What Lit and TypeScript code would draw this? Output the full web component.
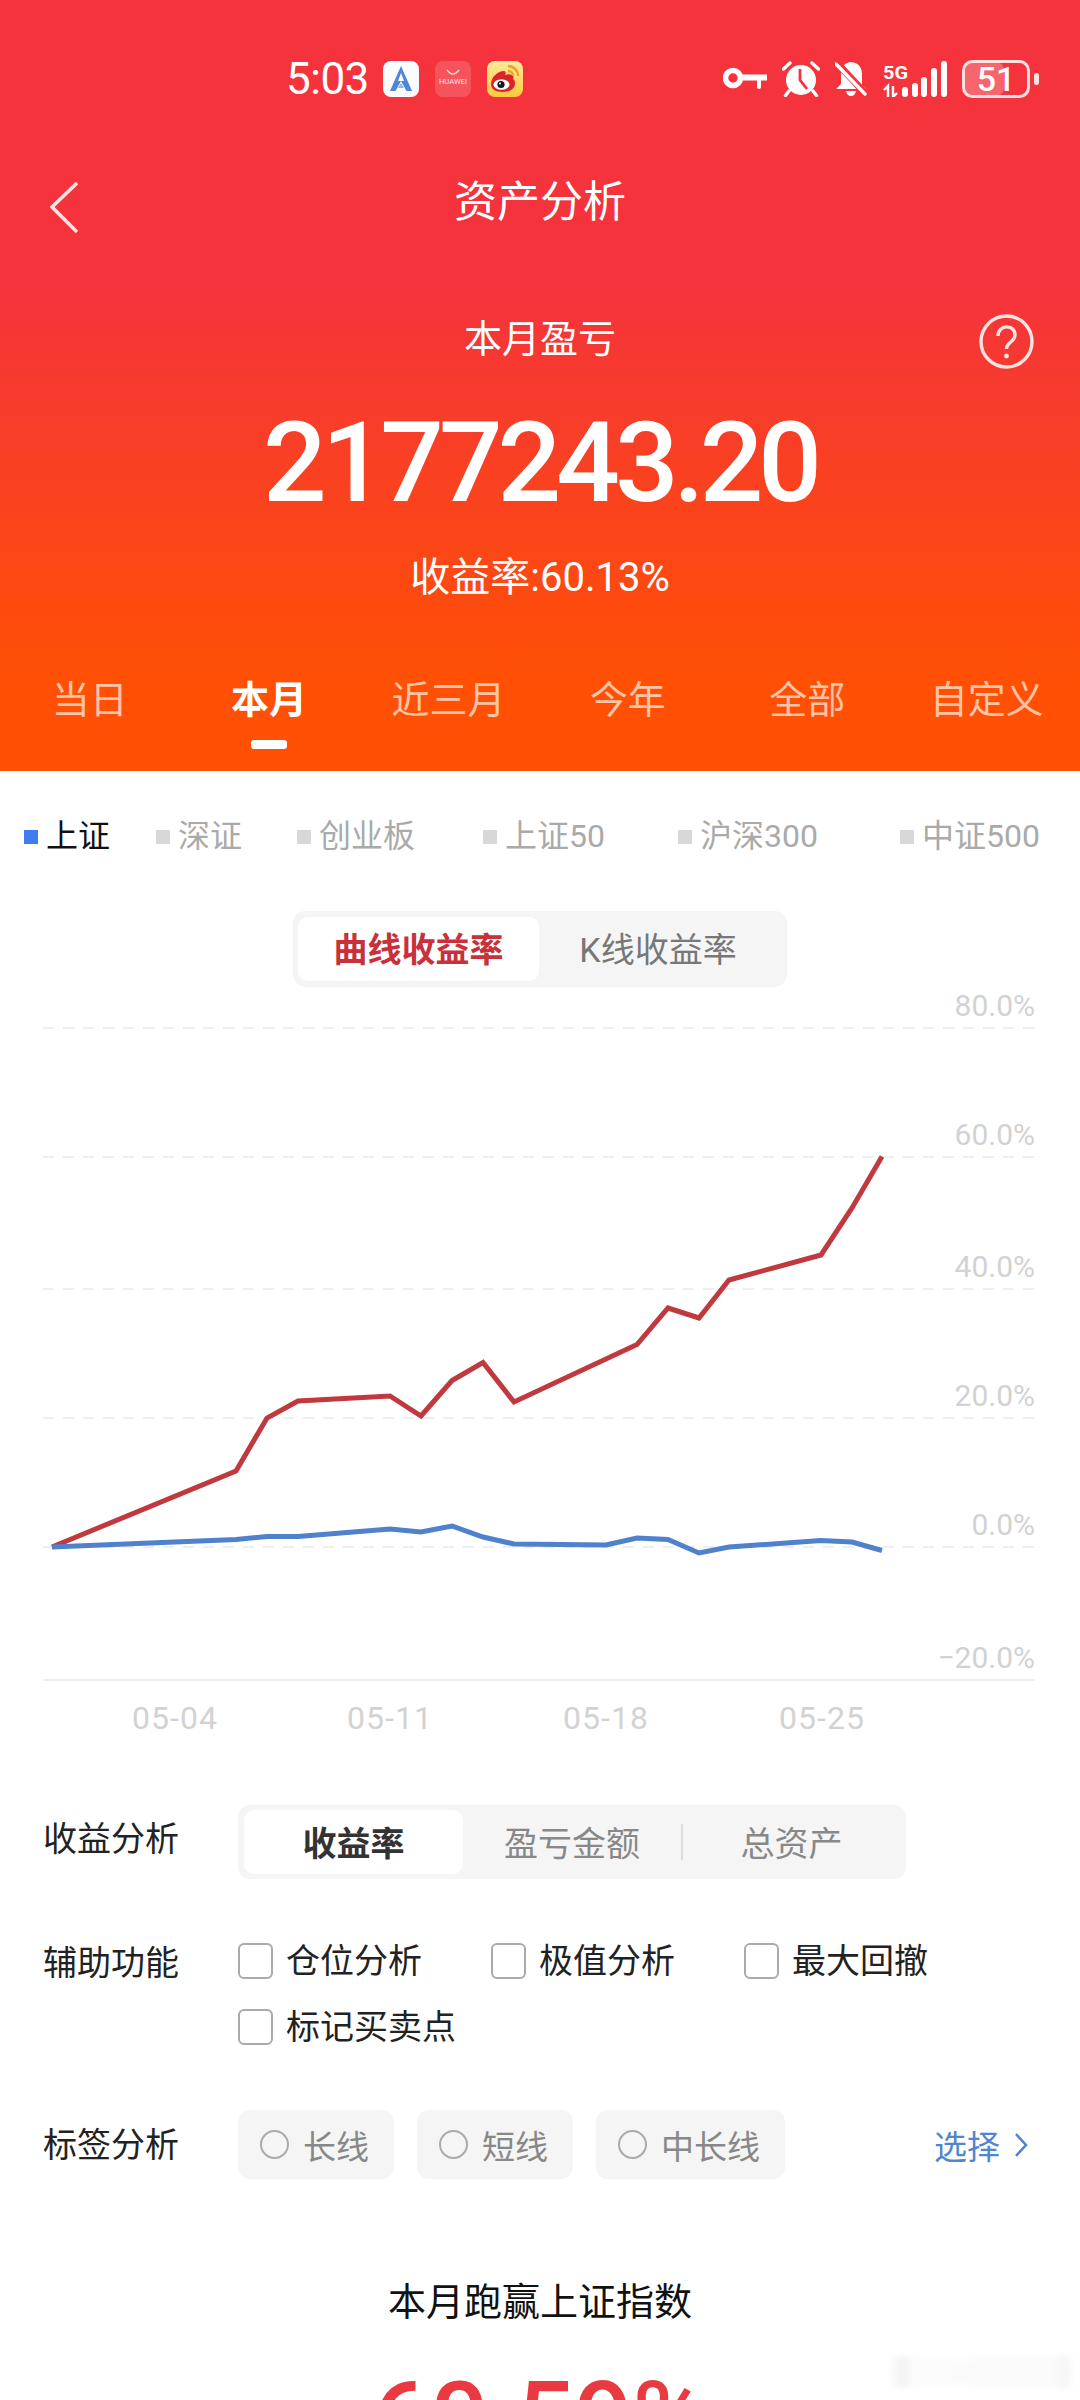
import { LitElement, html, svg, css } from 'lit';
import { customElement, property } from 'lit/decorators.js';

const SANS = css`Roboto, 'Noto Sans CJK SC', sans-serif`;

const RED_LINE = [
  [52, 1547], [236, 1471], [267, 1418], [298, 1401], [390, 1396], [421, 1416],
  [452, 1380.5], [483, 1362.5], [514, 1402], [637, 1344.5], [668, 1308], [699, 1318],
  [729, 1280], [821, 1255], [852, 1208], [882, 1156.5],
];
const BLUE_LINE = [
  [52, 1547], [236, 1539.5], [267, 1536.5], [298, 1536.5], [390, 1529], [421, 1532],
  [452, 1526], [483, 1537], [514, 1544], [606, 1545], [637, 1538], [668, 1539.5],
  [699, 1553], [729, 1547], [821, 1540.5], [852, 1542], [882, 1550.5],
];
const GRID_Y = [
  { y: 1028, label: '80.0%' },
  { y: 1157, label: '60.0%' },
  { y: 1289, label: '40.0%' },
  { y: 1418, label: '20.0%' },
  { y: 1547, label: '0.0%' },
];
const DATES = [
  { x: 175, label: '05-04' },
  { x: 390, label: '05-11' },
  { x: 606, label: '05-18' },
  { x: 822, label: '05-25' },
];
const TABS = ['当日', '本月', '近三月', '今年', '全部', '自定义'];
const INDEXES = ['上证', '深证', '创业板', '上证50', '沪深300', '中证500'];
const TOOLS = ['仓位分析', '极值分析', '最大回撤', '标记买卖点'];
const TAGS = ['长线', '短线', '中长线'];

const pts = (list: number[][]) => list.map((p) => p.join(',')).join(' ');

@customElement('status-bar')
export class StatusBar extends LitElement {
  static styles = css`
    :host {
      display: flex;
      justify-content: space-between;
      align-items: center;
      height: 38px;
      padding: 60px 41px 0 286px;
      color: #fff;
      font-family: ${SANS};
    }
    .left,
    .right {
      display: flex;
      align-items: center;
    }
    .time {
      font-size: 44px;
      line-height: 38px;
      letter-spacing: -0.5px;
      width: 97px;
    }
    .app {
      display: block;
      width: 36px;
      height: 36px;
      margin-right: 16px;
    }
    svg {
      display: block;
    }
    .key,
    .alarm,
    .bell,
    .signal {
      margin-right: 15px;
    }
    text {
      font-family: Roboto, sans-serif;
      fill: #fff;
    }
  `;

  render() {
    return html`
      <div class="left">
        <span class="time">5:03</span>
        <svg class="app" viewBox="0 0 36 36">
          <rect width="36" height="36" rx="8" fill="#fbfcff" />
          <path d="M18 5 L29 30 H23.5 L18 20 L12.5 30 H7 Z" fill="#4f86d8" />
          <path d="M18 12 L21 20 H15 Z" fill="#fbfcff" />
          <path d="M15 27 H21 L18 22 Z" fill="#8fb3ea" />
        </svg>
        <svg class="app" viewBox="0 0 36 36">
          <rect width="36" height="36" rx="8" fill="#f6545c" />
          <path d="M12 9 Q18 17 24 9" fill="none" stroke="#fbdada" stroke-width="1.4" />
          <text x="18" y="23" font-size="7.6" text-anchor="middle" style="fill:#fde3e3">HUAWEI</text>
        </svg>
        <svg class="app" viewBox="0 0 36 36">
          <defs>
            <linearGradient id="wb" x1="0" y1="0" x2="0" y2="1">
              <stop offset="0" stop-color="#fdea9a" />
              <stop offset="1" stop-color="#fcc83e" />
            </linearGradient>
          </defs>
          <rect width="36" height="36" rx="8" fill="url(#wb)" />
          <path d="M4 23 C4 16 11 10 17 10 C19 10 19 13 18 14 C24 12 28 15 26 18 C30 20 29 31 16 31 C8 31 4 28 4 23 Z" fill="#d9252a" />
          <ellipse cx="14.5" cy="23.5" rx="8" ry="5.2" fill="#fff" />
          <circle cx="14" cy="23.5" r="3.6" fill="#1a1a1a" />
          <circle cx="13" cy="22.4" r="1" fill="#fff" />
          <path d="M21 5 A10 10 0 0 1 31 15 M21 10 A5 5 0 0 1 26 15" fill="none" stroke="#f0a02c" stroke-width="2.4" />
        </svg>
      </div>
      <div class="right">
        <svg class="key" width="44" height="24" viewBox="0 0 44 24">
          <circle cx="10" cy="11" r="7.5" fill="none" stroke="#fff" stroke-width="5.6" />
          <path d="M17 7.5 H44 V13.5 H38 V20 Q38 22 36 22 Q34 22 34 20 V13.5 H17 Z" fill="#fff" />
        </svg>
        <svg class="alarm" width="38" height="36" viewBox="0 0 38 36">
          <circle cx="19" cy="19" r="15" fill="#fff" />
          <path d="M18 8 V19 L25 28" fill="none" stroke="#f4333c" stroke-width="2.8" />
          <path d="M1.5 8 L8 2 M36.5 8 L30 2 M7 30 L3.5 34.5 M31 30 L34.5 34.5" stroke="#fff" stroke-width="3.4" stroke-linecap="round" />
        </svg>
        <svg class="bell" width="32" height="36" viewBox="0 0 32 36">
          <path d="M16 1 Q27 2 27 14 V24 L31 28 H1 L6 23 V14 Q6 2 16 1 Z M11 30 H21 Q20 35 16 35 Q12 35 11 30 Z" fill="#fff" />
          <path d="M1 1 L31 33" stroke="#f4333c" stroke-width="7" />
          <path d="M1 3 L30 33" stroke="#fff" stroke-width="3.4" stroke-linecap="round" />
        </svg>
        <svg class="signal" width="65" height="36" viewBox="0 0 65 36">
          <text x="1" y="18" font-size="19" font-weight="700" textLength="25" lengthAdjust="spacingAndGlyphs">5G</text>
          <path d="M6 36 V25 L2 29 M11 25 V36 L15 32" fill="none" stroke="#fff" stroke-width="2.4" />
          <rect x="20" y="26" width="6" height="10" rx="3" fill="#fff" />
          <rect x="30" y="22" width="6" height="14" rx="3" fill="#fff" />
          <rect x="39" y="16" width="6" height="20" rx="3" fill="#fff" />
          <rect x="49" y="7" width="6" height="29" rx="3" fill="#fff" />
          <rect x="59" y="0" width="6" height="36" rx="3" fill="#fff" />
        </svg>
        <svg width="77" height="38" viewBox="0 0 77 38">
          <rect x="3" y="2" width="39" height="34" rx="8" fill="#fff" opacity="0.25" />
          <rect x="1.5" y="1.5" width="65" height="35" rx="9" fill="none" stroke="#fde0e0" stroke-width="3" />
          <rect x="72" y="13" width="5" height="12" rx="2.5" fill="#fde0e0" />
          <text x="34" y="31" font-size="34" font-weight="500" text-anchor="middle">51</text>
        </svg>
      </div>
    `;
  }
}

@customElement('seg-control')
export class SegControl extends LitElement {
  @property({ type: Array }) items: string[] = [];

  static styles = css`
    :host {
      display: flex;
      box-sizing: border-box;
      height: 74px;
      padding: 5px 6px;
      background: #f5f5f5;
      border-radius: 12px;
      font-family: ${SANS};
      font-size: 34px;
      color: #888;
    }
    .item {
      display: flex;
      justify-content: center;
      align-items: center;
      width: 219px;
      padding-bottom: 2px;
    }
    .item.on {
      background: #fff;
      border-radius: 10px;
      color: #333;
      font-weight: 700;
    }
    .sep {
      width: 2px;
      height: 36px;
      margin-top: 14px;
      background: #ddd;
    }
    .item.tail {
      flex: 1;
    }
    .item.mid {
      width: 218px;
    }
  `;

  render() {
    return html`
      <div class="item on">${this.items[0]}</div>
      <div class="item mid">${this.items[1]}</div>
      <div class="sep"></div>
      <div class="item tail">${this.items[2]}</div>
    `;
  }
}

@customElement('app-root')
export class AppRoot extends LitElement {
  static styles = css`
    :host {
      display: block;
      position: relative;
      width: 1080px;
      height: 2400px;
      overflow: hidden;
      background: #fff;
      font-family: ${SANS};
    }
    .header {
      height: 771px;
      background: linear-gradient(180deg, #f4333c 0%, #f4333c 37%, #ff5005 88%, #ff5005 100%);
      color: #fff;
    }
    .nav,
    .sub {
      display: grid;
      grid-template-columns: 1fr auto 1fr;
    }
    .nav {
      height: 52px;
      margin-top: 78px;
    }
    .nav .title {
      font-size: 43px;
      line-height: 52px;
    }
    .back {
      margin: 6px 0 0 50px;
    }
    .sub {
      height: 56px;
      margin-top: 83px;
    }
    .sub .title {
      grid-column: 2;
      font-size: 38px;
      line-height: 56px;
    }
    .help {
      justify-self: end;
      margin: 3px 46px 0 0;
    }
    .amount {
      margin-top: 36px;
      font-size: 112px;
      font-weight: 500;
      line-height: 120px;
      letter-spacing: -5px;
      text-align: center;
    }
    .rate {
      margin-top: 30px;
      font-size: 40px;
      line-height: 50px;
      text-align: center;
    }
    .tabs {
      display: grid;
      grid-template-columns: repeat(6, 179.4px);
      margin-top: 72px;
      font-size: 38px;
      line-height: 50px;
      text-align: center;
      color: #ffc3a6;
    }
    .tab.on {
      color: #fff;
      font-weight: 700;
    }
    .bar {
      width: 36px;
      height: 9px;
      margin: 15px auto 0;
      background: #fff;
      border-radius: 3px;
    }
    .legend {
      display: grid;
      grid-template-columns: 132px 141px 186px 195px 222px auto;
      margin: 43px 0 0 24px;
      font-size: 32px;
      line-height: 44px;
      color: #aaa;
    }
    .legend .item {
      display: flex;
      align-items: center;
      gap: 8px;
    }
    .legend .dot {
      width: 14px;
      height: 14px;
      margin-top: 2px;
      background: #d8d8d8;
    }
    .legend .on {
      color: #111;
    }
    .legend .on .dot {
      background: #3f7cf0;
    }
    .toggle {
      display: flex;
      box-sizing: border-box;
      width: 494px;
      height: 76px;
      margin: 53px 0 0 293px;
      padding: 6px 5px;
      background: #f5f5f5;
      border-radius: 12px;
      font-size: 34px;
      color: #777;
    }
    .toggle div {
      display: flex;
      justify-content: center;
      align-items: center;
      padding-bottom: 4px;
    }
    .toggle .on {
      width: 241px;
      background: #fff;
      border-radius: 10px;
      color: #c8303a;
      font-weight: 700;
    }
    .toggle .off {
      flex: 1;
      padding-right: 5px;
    }
    .chart {
      display: block;
      width: 1080px;
      height: 772px;
    }
    .chart text {
      font-family: Roboto, sans-serif;
      font-size: 30px;
      fill: #d2d2d2;
    }
    .chart text.date {
      font-size: 32px;
      letter-spacing: 1px;
    }
    .row {
      display: grid;
      grid-template-columns: 195px 1fr;
      padding-left: 43px;
      font-size: 34px;
      color: #222;
    }
    .row .label {
      line-height: 40px;
    }
    .row-seg {
      margin-top: 46px;
    }
    .row-seg .label {
      padding-top: 14px;
    }
    .row-seg seg-control {
      width: 668px;
    }
    .row-tools {
      margin-top: 64px;
    }
    .tools {
      display: grid;
      grid-template-columns: repeat(3, 253px);
      row-gap: 30px;
    }
    .check {
      display: flex;
      align-items: center;
      gap: 13px;
      line-height: 36px;
    }
    .box {
      box-sizing: border-box;
      width: 35px;
      height: 36px;
      background: #fff;
      border: 2px solid #aaa;
      border-radius: 6px;
    }
    .row-tags {
      margin-top: 65px;
    }
    .row-tags .label {
      padding-top: 15px;
    }
    .tags {
      display: flex;
      align-items: center;
      gap: 23px;
      padding-right: 52px;
    }
    .tag {
      display: flex;
      align-items: center;
      gap: 14px;
      height: 69px;
      padding: 0 25px 0 22px;
      background: #f5f5f5;
      border-radius: 12px;
      color: #888;
      font-size: 33px;
    }
    .radio {
      box-sizing: border-box;
      width: 29px;
      height: 29px;
      border: 2px solid #aaa;
      border-radius: 50%;
    }
    .pick {
      display: flex;
      align-items: center;
      gap: 14px;
      margin-left: auto;
      color: #4f86d0;
      font-size: 33px;
    }
    .beat {
      margin-top: 103px;
      font-size: 38px;
      line-height: 40px;
      text-align: center;
      color: #111;
    }
    .pct {
      margin-top: 47px;
      font-size: 102px;
      font-weight: 500;
      line-height: 100px;
      text-align: center;
      color: #e83a40;
    }
    /* faint smudge left over in the screenshot */
    .smudge {
      position: absolute;
      left: 890px;
      top: 2356px;
      width: 180px;
      height: 32px;
      background: linear-gradient(90deg, #fdfdfd, #f2f2f2 8%, #fcfcfc 12%, #fbfbfb 90%, #f4f4f4);
      filter: blur(3px);
    }
  `;

  render() {
    return html`
      <div class="header">
        <status-bar></status-bar>
        <div class="nav">
          <svg class="back" width="28" height="52" viewBox="0 0 28 52">
            <path d="M27 1 L2 25 L27 50" fill="none" stroke="#fde4e4" stroke-width="3.6" />
          </svg>
          <div class="title">资产分析</div>
        </div>
        <div class="sub">
          <div class="title">本月盈亏</div>
          <svg class="help" width="55" height="55" viewBox="0 0 55 55">
            <circle cx="27.5" cy="27.5" r="25.5" fill="none" stroke="#fde4e0" stroke-width="3.4" />
            <path d="M19 22 C19 10 36 10 36 21 C36 28 27.5 28 27.5 35" fill="none" stroke="#fde4e0" stroke-width="3.4" />
            <circle cx="27.5" cy="42" r="2.4" fill="#fde4e0" />
          </svg>
        </div>
        <div class="amount">2177243.20</div>
        <div class="rate">收益率:60.13%</div>
        <div class="tabs">
          ${TABS.map(
            (t, i) => html`
              <div class="tab ${i === 1 ? 'on' : ''}">
                ${t}${i === 1 ? html`<div class="bar"></div>` : ''}
              </div>
            `,
          )}
        </div>
      </div>

      <div class="legend">
        ${INDEXES.map(
          (t, i) => html`<div class="item ${i === 0 ? 'on' : ''}"><span class="dot"></span>${t}</div>`,
        )}
      </div>

      <div class="toggle">
        <div class="on">曲线收益率</div>
        <div class="off">K线收益率</div>
      </div>

      <svg class="chart" viewBox="0 987 1080 772">
        ${GRID_Y.map(
          (g) => svg`
            <line x1="43" x2="1035" y1=${g.y} y2=${g.y} stroke="#eeeeee" stroke-width="2" stroke-dasharray="11 9" />
            <text x="1035" y=${g.y - 12} text-anchor="end">${g.label}</text>
          `,
        )}
        <text x="1035" y="1668" text-anchor="end">−20.0%</text>
        <line x1="43" x2="1035" y1="1680" y2="1680" stroke="#eeeeee" stroke-width="2" />
        ${DATES.map((d) => svg`<text class="date" x=${d.x} y="1729" text-anchor="middle">${d.label}</text>`)}
        <polyline points=${pts(RED_LINE)} fill="none" stroke="#c0393f" stroke-width="5" />
        <polyline points=${pts(BLUE_LINE)} fill="none" stroke="#4f81cc" stroke-width="5" />
      </svg>

      <div class="row row-seg">
        <div class="label">收益分析</div>
        <seg-control .items=${['收益率', '盈亏金额', '总资产']}></seg-control>
      </div>

      <div class="row row-tools">
        <div class="label">辅助功能</div>
        <div class="tools">
          ${TOOLS.map((t) => html`<div class="check"><span class="box"></span>${t}</div>`)}
        </div>
      </div>

      <div class="row row-tags">
        <div class="label">标签分析</div>
        <div class="tags">
          ${TAGS.map((t) => html`<div class="tag"><span class="radio"></span>${t}</div>`)}
          <div class="pick">
            选择
            <svg width="14" height="24" viewBox="0 0 14 24">
              <path d="M2 1 L12 12 L2 23" fill="none" stroke="#4f86d0" stroke-width="2.6" />
            </svg>
          </div>
        </div>
      </div>

      <div class="beat">本月跑赢上证指数</div>
      <div class="pct">60.59%</div>
      <div class="smudge"></div>
    `;
  }
}
